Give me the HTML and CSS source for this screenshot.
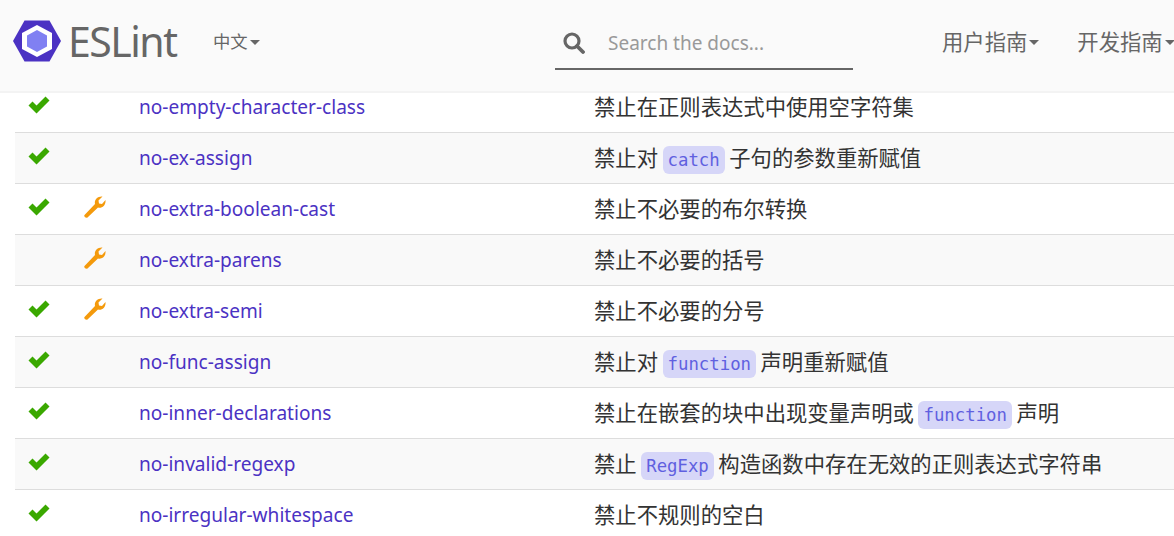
FILE: index.html
```html
<!DOCTYPE html>
<html lang="zh">
<head>
<meta charset="utf-8">
<title>ESLint</title>
<link rel="stylesheet" href="styles.css">
</head>
<body>
<header class="nav">
  <a class="brand">
    <svg class="logo" viewBox="0 0 48 42" width="48" height="42"><path d="M0 21 11.500 0.500h25L48 21 36.500 41.500h-25z" fill="#4b32c3"/><path d="M24 5 39 13v16L24 37 9 29V13z" fill="#fff"/><path d="M24 10 34 15.500v11L24 32 14 26.500v-11z" fill="#8080f2"/></svg>
    <span class="brand-name">ESLint</span>
  </a>
  <a class="nav-link lang">中文<i class="caret"></i></a>
  <div class="search">
    <svg class="search-icon" viewBox="0 0 22 22" width="22" height="22"><circle cx="9" cy="9" r="7" fill="none" stroke="#666" stroke-width="3.200"/><path d="M14 14l6 6" stroke="#666" stroke-width="3.800" stroke-linecap="round"/></svg>
    <span class="placeholder">Search the docs...</span>
  </div>
  <nav class="menu">
    <a class="nav-link main">用户指南<i class="caret"></i></a>
    <a class="nav-link main">开发指南<i class="caret"></i></a>
  </nav>
</header>
<main class="content">
  <table class="rules">
    <tr><td class="c1"><svg class="ok" viewBox="0 0 22 18"><path d="M0.500 9.500 4.500 5.500 8.500 9.500 17.500 0.500 21.500 4.500 8.500 17.500z"/></svg></td><td class="c2"></td><td class="c3"><a>no-empty-character-class</a></td><td>禁止在正则表达式中使用空字符集</td></tr>
    <tr><td class="c1"><svg class="ok" viewBox="0 0 22 18"><path d="M0.500 9.500 4.500 5.500 8.500 9.500 17.500 0.500 21.500 4.500 8.500 17.500z"/></svg></td><td class="c2"></td><td class="c3"><a>no-ex-assign</a></td><td>禁止对 <code>catch</code> 子句的参数重新赋值</td></tr>
    <tr><td class="c1"><svg class="ok" viewBox="0 0 22 18"><path d="M0.500 9.500 4.500 5.500 8.500 9.500 17.500 0.500 21.500 4.500 8.500 17.500z"/></svg></td><td class="c2"><svg class="fix" viewBox="0 0 22 22"><path d="M0.500 19 11 8C10 4 13.500 0 18.500 0.500L14.500 4.500 15 7.500 18 8 21.500 4C22 9.500 18 12.500 14 11.500L3.500 21.500C2 22.500 -0.500 20.500 0.500 19z"/></svg></td><td class="c3"><a>no-extra-boolean-cast</a></td><td>禁止不必要的布尔转换</td></tr>
    <tr><td class="c1"></td><td class="c2"><svg class="fix" viewBox="0 0 22 22"><path d="M0.500 19 11 8C10 4 13.500 0 18.500 0.500L14.500 4.500 15 7.500 18 8 21.500 4C22 9.500 18 12.500 14 11.500L3.500 21.500C2 22.500 -0.500 20.500 0.500 19z"/></svg></td><td class="c3"><a>no-extra-parens</a></td><td>禁止不必要的括号</td></tr>
    <tr><td class="c1"><svg class="ok" viewBox="0 0 22 18"><path d="M0.500 9.500 4.500 5.500 8.500 9.500 17.500 0.500 21.500 4.500 8.500 17.500z"/></svg></td><td class="c2"><svg class="fix" viewBox="0 0 22 22"><path d="M0.500 19 11 8C10 4 13.500 0 18.500 0.500L14.500 4.500 15 7.500 18 8 21.500 4C22 9.500 18 12.500 14 11.500L3.500 21.500C2 22.500 -0.500 20.500 0.500 19z"/></svg></td><td class="c3"><a>no-extra-semi</a></td><td>禁止不必要的分号</td></tr>
    <tr><td class="c1"><svg class="ok" viewBox="0 0 22 18"><path d="M0.500 9.500 4.500 5.500 8.500 9.500 17.500 0.500 21.500 4.500 8.500 17.500z"/></svg></td><td class="c2"></td><td class="c3"><a>no-func-assign</a></td><td>禁止对 <code>function</code> 声明重新赋值</td></tr>
    <tr><td class="c1"><svg class="ok" viewBox="0 0 22 18"><path d="M0.500 9.500 4.500 5.500 8.500 9.500 17.500 0.500 21.500 4.500 8.500 17.500z"/></svg></td><td class="c2"></td><td class="c3"><a>no-inner-declarations</a></td><td>禁止在嵌套的块中出现变量声明或 <code>function</code> 声明</td></tr>
    <tr><td class="c1"><svg class="ok" viewBox="0 0 22 18"><path d="M0.500 9.500 4.500 5.500 8.500 9.500 17.500 0.500 21.500 4.500 8.500 17.500z"/></svg></td><td class="c2"></td><td class="c3"><a>no-invalid-regexp</a></td><td>禁止 <code>RegExp</code> 构造函数中存在无效的正则表达式字符串</td></tr>
    <tr><td class="c1"><svg class="ok" viewBox="0 0 22 18"><path d="M0.500 9.500 4.500 5.500 8.500 9.500 17.500 0.500 21.500 4.500 8.500 17.500z"/></svg></td><td class="c2"></td><td class="c3"><a>no-irregular-whitespace</a></td><td>禁止不规则的空白</td></tr>
  </table>
</main>
</body>
</html>
```
FILE: styles.css
```css
html, body { margin: 0; height: 536px; overflow: hidden; background: #fff; }
body { font-family: "Noto Sans", "Noto Sans CJK SC", sans-serif; font-size: 21.33px; color: #333; }
.nav { position: fixed; top: 0; left: 0; right: 0; height: 91px; overflow: hidden; display: flex; align-items: center; background: #fafafa; border-bottom: 2px solid #f3f3f3; z-index: 2; white-space: nowrap; }
.brand { display: flex; align-items: center; margin-left: 13px; width: 200px; flex: none; }
.logo { display: block; margin-top: -9px; }
.brand-name { margin-left: 7px; margin-top: -9px; font-size: 41px; letter-spacing: -1.5px; color: #666; line-height: 48px; }
.nav-link { color: #666; margin-top: -10px; display: inline-flex; align-items: center; flex: none; }
.lang { font-size: 17.33px; width: 47px; }
.main { font-size: 21.33px; }
.caret { display: inline-block; margin-left: 2px; margin-top: 3px; border-top: 5px solid #666; border-left: 5px solid transparent; border-right: 5px solid transparent; }
.search { margin-left: 295px; width: 298px; height: 52px; box-sizing: border-box; display: flex; align-items: center; flex: none; border-bottom: 2px solid #666; margin-top: -4px; }
.search-icon { margin-left: 8px; }
.placeholder { margin-left: 23px; font-size: 19px; color: #999; }
.menu { display: flex; gap: 38px; margin-left: 89px; flex: none; }
.content { padding: 81px 0 0 15px; }
.rules { border-collapse: collapse; width: 1300px; table-layout: fixed; }
.rules td { height: 51px; padding: 0 0 2px; box-sizing: border-box; border-bottom: 1px solid #ddd; vertical-align: middle; white-space: nowrap; }
.rules tr:nth-child(even) td { background: #f9f9f9; }
.c1 { width: 68px; }
.c2 { width: 56px; }
.c3 { width: 455px; }
.rules td a { color: #4b32c3; font-size: 19.07px; }
.ok { width: 22px; height: 18px; display: block; margin: -1px 0 0 13px; fill: #3aa800; }
.fix { width: 22px; height: 22px; display: block; margin: -1px 0 0 1px; fill: #f49a0c; }
code { font-family: "DejaVu Sans Mono", monospace; font-size: 17.33px; color: #6060e0; background: #d6d6f8; border-radius: 6px; padding: 4px 5px; margin: 0 -1px; }
```
